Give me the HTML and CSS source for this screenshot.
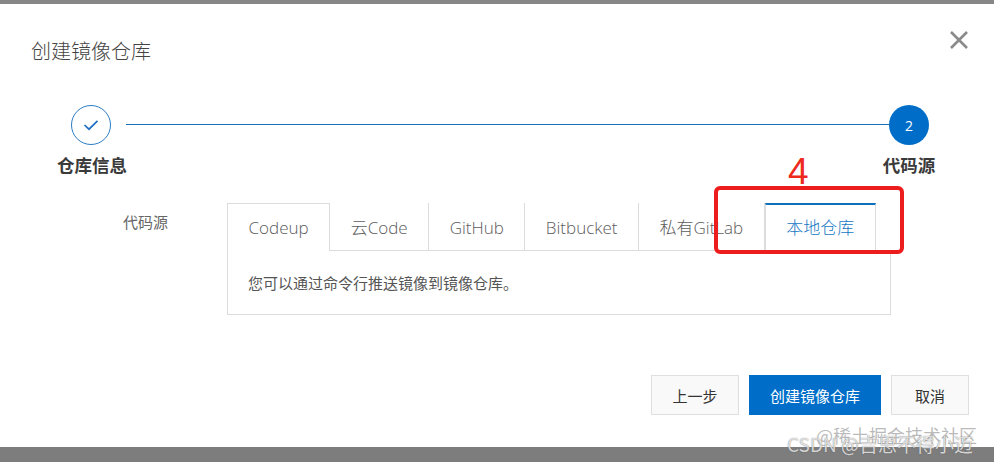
FILE: index.html
```html
<!DOCTYPE html>
<html lang="zh">
<head>
<meta charset="utf-8">
<title>创建镜像仓库</title>
<link rel="stylesheet" href="styles.css">
</head>
<body>
<div class="page">
  <div class="backdrop-top"></div>
  <main class="modal">
    <header class="modal-head">
      <h1 class="modal-title">创建镜像仓库</h1>
      <svg class="close" viewBox="0 0 18 18" width="18" height="18"><path d="M1 1L17 17M17 1L1 17" stroke="#8a8a8a" stroke-width="2.6" fill="none"/></svg>
    </header>
    <section class="steps">
      <div class="step step-start">
        <span class="dot dot-done"><svg viewBox="0 0 16 12" width="16" height="12"><path d="M1.5 6L6 10.2L14.5 1.8" stroke="#1f6fc4" stroke-width="1.7" fill="none"/></svg></span>
        <span class="step-label">仓库信息</span>
      </div>
      <div class="step-line"></div>
      <div class="step step-end">
        <span class="dot dot-active">2</span>
        <span class="step-label">代码源</span>
      </div>
    </section>
    <section class="form-row">
      <div class="form-label">代码源</div>
      <div class="tabs-wrap">
        <div class="tabs">
          <div class="tab tab-first">Codeup</div>
          <div class="tab">云Code</div>
          <div class="tab">GitHub</div>
          <div class="tab">Bitbucket</div>
          <div class="tab">私有GitLab</div>
          <div class="tab tab-active">本地仓库</div>
          <div class="tab-rest"></div>
        </div>
        <div class="tab-panel">您可以通过命令行推送镜像到镜像仓库。</div>
      </div>
    </section>
    <footer class="actions">
      <button class="btn btn-plain btn-prev">上一步</button>
      <button class="btn btn-primary">创建镜像仓库</button>
      <button class="btn btn-plain btn-cancel">取消</button>
    </footer>
  </main>
  <div class="backdrop-bottom"></div>
  <div class="mark-num">4</div>
  <div class="mark-box"></div>
  <div class="wm wm-a">@稀土掘金技术社区</div>
  <div class="wm wm-b">CSDN @吉思不得小迈</div>
</div>
</body>
</html>
```
FILE: styles.css
```css
* { box-sizing: border-box; }
html, body { margin: 0; padding: 0; }
body { background: #fff; font-family: "Noto Sans CJK SC", "Open Sans", "Liberation Sans", sans-serif; color: #333; }
.page { position: relative; width: 994px; height: 462px; overflow: hidden; display: flex; flex-direction: column; }
.backdrop-top { height: 4px; background: #878787; flex: none; }
.backdrop-bottom { height: 15px; background: #7d7d7d; flex: none; }
.modal { flex: 1; background: #fff; display: flex; flex-direction: column; }
.modal-head { display: flex; justify-content: space-between; padding: 33px 26px 0 31px; height: 101px; }
.modal-title { margin: 0; font-size: 20px; line-height: 28px; font-weight: 300; color: #444; }
.close { margin-top: -6px; }
.steps { display: flex; padding: 0 59px 0 57px; height: 98px; }
.step { display: flex; flex-direction: column; align-items: center; width: 70px; }
.step-start .dot { margin-right: 2px; }
.step-end { width: 52px; }
.dot { width: 40px; height: 40px; border-radius: 50%; display: flex; align-items: center; justify-content: center; flex: none; }
.dot-done { border: 1px solid #2a7cc4; }
.dot-active { background: #006ec9; color: #fff; font-size: 14px; font-family: "Open Sans", sans-serif; }
.step-label { margin-top: 7px; font-size: 17.5px; line-height: 26px; font-weight: 700; color: #3a3a3a; white-space: nowrap; }
.step-line { flex: 1; height: 1px; background: #1a6fb8; margin: 19px -6px 0 -1px; }
.form-row { display: flex; height: 172px; padding-left: 123px; }
.form-label { width: 104px; font-size: 15px; line-height: 40px; color: #666; margin-top: -1px; }
.tabs-wrap { width: 664px; }
.tabs { display: flex; height: 48px; }
.tab { padding: 0 20.5px; font-family: "Open Sans", "Noto Sans CJK SC", sans-serif; font-size: 17px; line-height: 50px; color: #5c5c5c; border-right: 1px solid #dcdcdc; border-bottom: 1px solid #dcdcdc; white-space: nowrap; font-weight: 300; }
.tab-first { border-top: 1px solid #dcdcdc; border-left: 1px solid #dcdcdc; border-bottom: 0; line-height: 48px; }
.tab-active { color: #1677c4; border-top: 2px solid #0f6fb8; border-left: 1px solid #dcdcdc; border-bottom: 0; line-height: 46px; }
.tab-rest { flex: 1; border-bottom: 1px solid #dcdcdc; }
.tab-panel { height: 64px; border: 1px solid #dcdcdc; border-top: 0; padding: 0 20px; font-size: 15px; line-height: 64px; color: #555; }
.actions { display: flex; justify-content: flex-end; gap: 10px; padding-right: 25px; }
.btn { height: 40px; font-family: inherit; font-size: 15px; border-radius: 0; padding: 0; }
.btn-plain { background: #f9f9f9; border: 1px solid #dfdfdf; color: #333; }
.btn-prev { width: 88px; }
.btn-cancel { width: 78px; }
.btn-primary { width: 132px; background: #006ec9; border: 0; color: #fff; }
.mark-num { position: absolute; left: 788px; top: 151px; font-family: "Liberation Sans", sans-serif; font-size: 37px; line-height: 42px; color: #ee2a1e; }
.mark-box { position: absolute; left: 714px; top: 186px; width: 190px; height: 68px; border: 4px solid #ee1d1d; border-radius: 6px; }
.wm { position: absolute; white-space: nowrap; line-height: 22px; }
.wm-a { left: 816px; top: 424px; font-size: 18px; color: rgba(140,140,140,0.6); }
.wm-b { left: 787px; top: 433px; font-size: 19px; color: rgba(255,255,255,0.75); text-shadow: 0 0 1px rgba(70,70,70,0.8); }
```
